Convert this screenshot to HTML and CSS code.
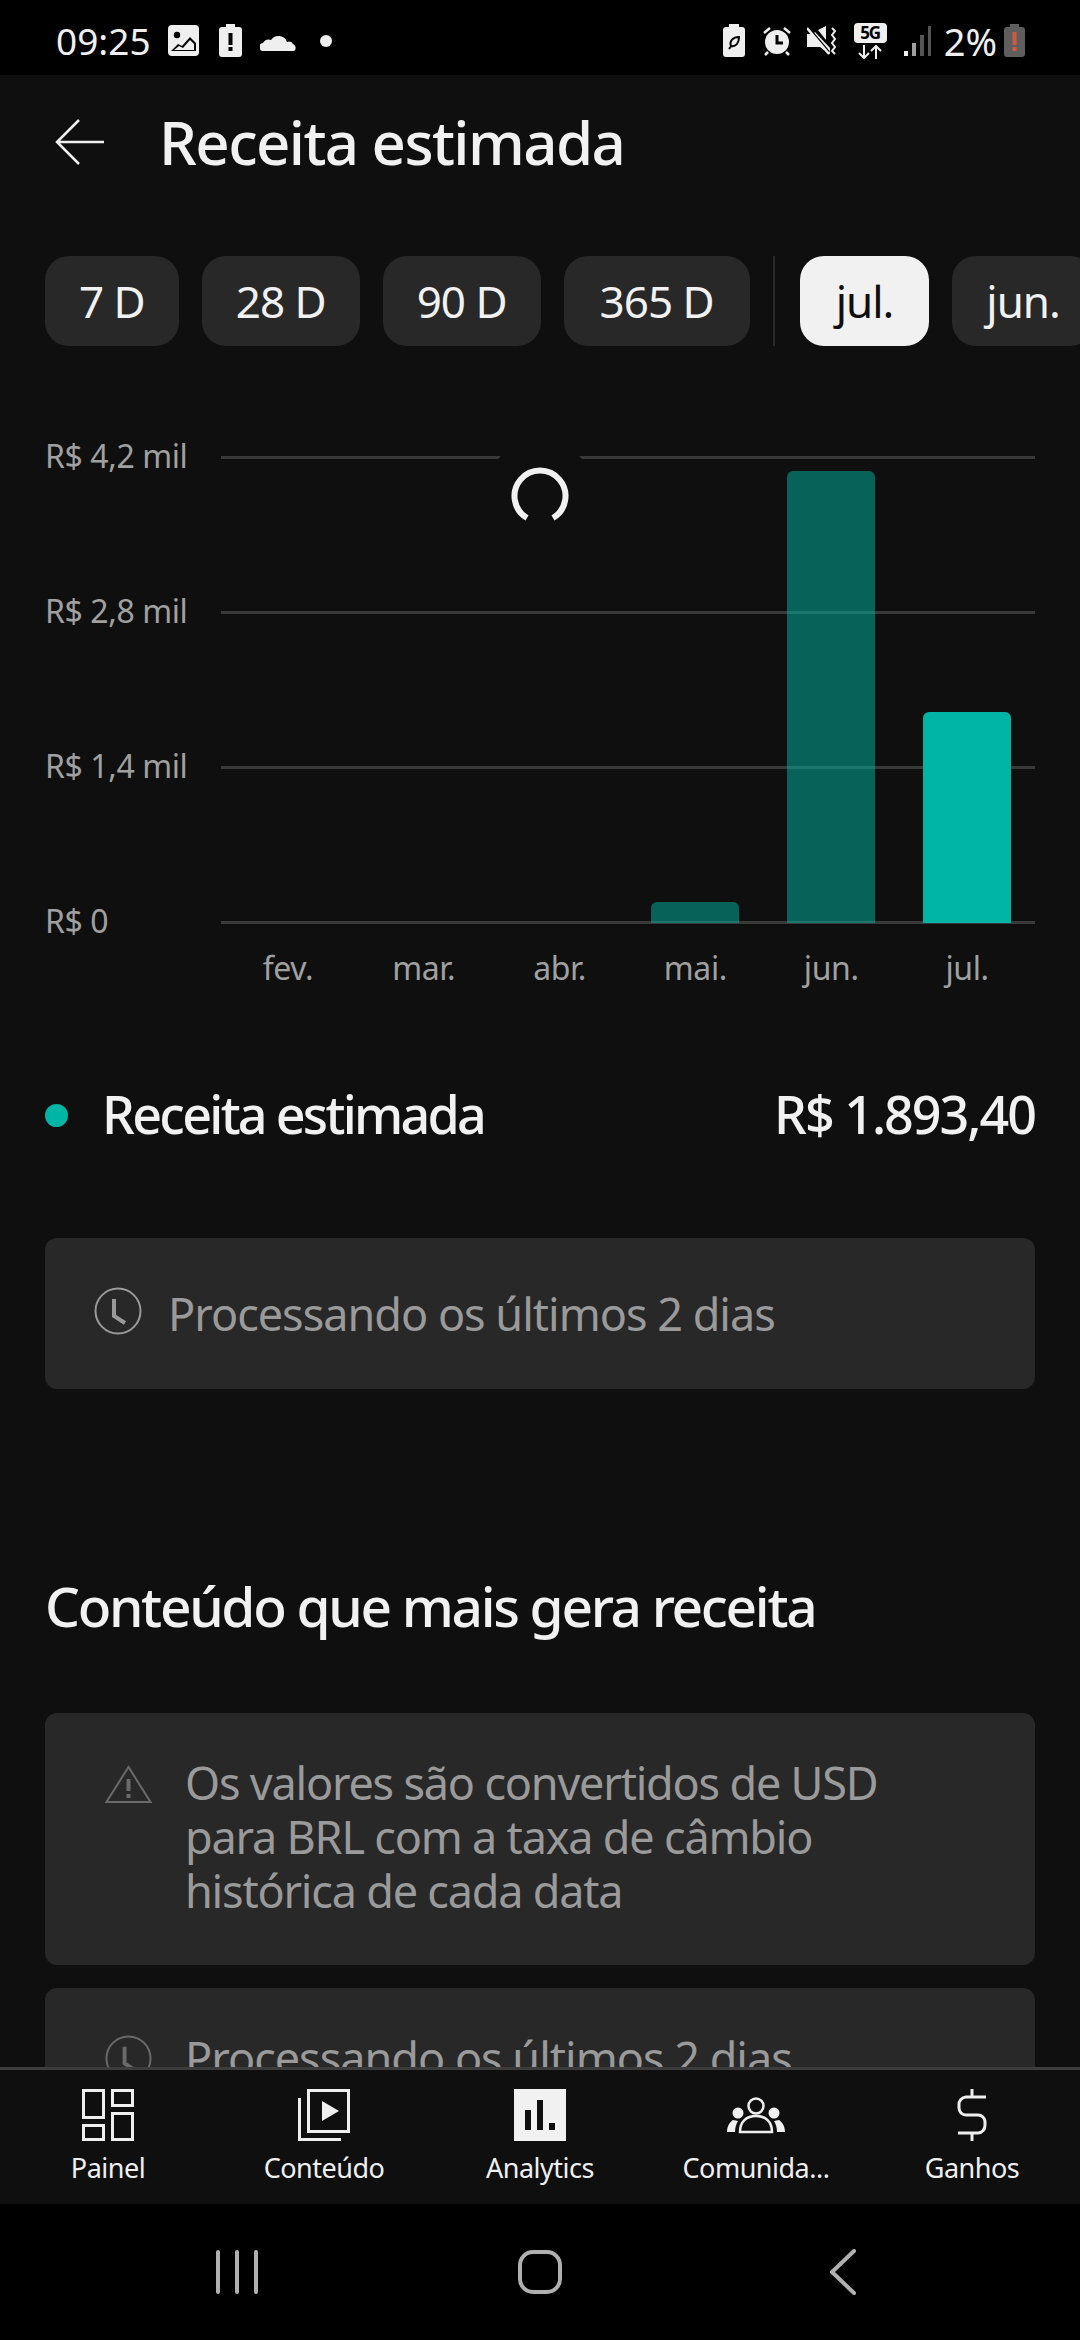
FILE: index.html
```html
<!DOCTYPE html>
<html lang="pt-BR">
<head>
  <meta charset="UTF-8" />
  <meta name="viewport" content="width=device-width, initial-scale=1.0" />
  <title>Receita estimada</title>
  <link rel="stylesheet" href="styles.css">
</head>
<body>
  <div class="status">
    <div class="status-side">
      <span class="time">09:25</span>
      <svg class="st st-image" width="31" height="31" viewBox="0 0 31 31"><rect width="31" height="31" rx="4" fill="#efefef"/><circle cx="9" cy="10" r="3.2" fill="#000"/><path d="M3 26l7-7 4 2 8-9 6 6v8z" fill="#000"/><path d="M6 25l5-4 4 2 7-8 4 4v6z" fill="#efefef"/></svg>
      <svg class="st st-alert" width="23" height="33" viewBox="0 0 23 33"><path d="M7 0h9v3h4a3 3 0 0 1 3 3v24a3 3 0 0 1-3 3H3a3 3 0 0 1-3-3V6a3 3 0 0 1 3-3h4z" fill="#efefef"/><rect x="9.500" y="9" width="4" height="12" fill="#000"/><rect x="9.500" y="23" width="4" height="4" fill="#000"/></svg>
      <svg class="st st-cloud" width="36" height="20" viewBox="0 0 36 20"><path d="M4 20a4 4 0 0 1-1-8 7 7 0 0 1 8-3 9 9 0 0 1 16 2 5 5 0 0 1 6 2 4 4 0 0 1 1 7z" fill="#efefef"/></svg>
      <span class="st-dot"></span>
    </div>
    <div class="status-side">
      <svg class="st" width="22" height="33" viewBox="0 0 22 33"><path d="M6 0h10v3h3a3 3 0 0 1 3 3v24a3 3 0 0 1-3 3H3a3 3 0 0 1-3-3V6a3 3 0 0 1 3-3h3z" fill="#efefef"/><path d="M6 25l3-4M8 22c-2-5 2-9 8-9 0 6-3 10-8 9z" fill="none" stroke="#000" stroke-width="2"/></svg>
      <svg class="st st-alarm" width="30" height="30" viewBox="0 0 30 30"><circle cx="15" cy="16" r="12" fill="#efefef"/><path d="M15 9v8h6" fill="none" stroke="#000" stroke-width="3"/><path d="M2 7l6-5M28 7l-6-5M6 26l-3 3M24 26l3 3" stroke="#efefef" stroke-width="2.500"/></svg>
      <svg class="st st-mute" width="30" height="29" viewBox="0 0 30 29"><path d="M0 8h6l2-2 15 16v6L13 21H0z" fill="#efefef"/><path d="M11 4l8-4v14z" fill="#efefef"/><path d="M1 1l21 25" stroke="#000" stroke-width="2"/><path d="M0 2l22 26" stroke="#efefef" stroke-width="2.500"/><path d="M25 2l3 3-3 4 3 4-3 4 3 4-3 4 3 3" fill="none" stroke="#efefef" stroke-width="2"/></svg>
      <div class="st-net">
        <span class="net-badge">5G</span>
        <svg width="26" height="14" viewBox="0 0 26 14"><path d="M7 0v12M2 8l5 5 5-5M19 14V2M14 6l5-5 5 5" fill="none" stroke="#efefef" stroke-width="2"/></svg>
      </div>
      <svg class="st st-signal" width="27" height="30" viewBox="0 0 27 30"><rect x="0" y="25" width="4" height="5" fill="#efefef"/><rect x="8" y="17" width="4" height="13" fill="#a0a0a0"/><rect x="16" y="9" width="4" height="21" fill="#555"/><rect x="24" y="0" width="3" height="30" fill="#555"/></svg>
      <span class="battery-text">2%</span>
      <svg class="st" width="21" height="33" viewBox="0 0 21 33"><path d="M6 0h9v3h3a3 3 0 0 1 3 3v24a3 3 0 0 1-3 3H3a3 3 0 0 1-3-3V6a3 3 0 0 1 3-3h3z" fill="#5e5e5e"/><rect x="8.500" y="8" width="4" height="13" fill="#d2593d"/><rect x="8.500" y="23" width="4" height="4" fill="#d2593d"/></svg>
    </div>
  </div>

  <div class="screen">
    <div class="appbar">
      <svg class="back" width="50" height="46" viewBox="0 0 50 46"><path d="M24 1L2 23l22 22M2 23h47" fill="none" stroke="#efefef" stroke-width="2.500"/></svg>
      <h1>Receita estimada</h1>
    </div>

    <div class="chips">
      <span class="chip">7 D</span>
      <span class="chip">28 D</span>
      <span class="chip">90 D</span>
      <span class="chip chip-wide">365 D</span>
      <span class="chip-divider"></span>
      <span class="chip chip-active">jul.</span>
      <span class="chip">jun.</span>
    </div>

    <div class="chart">
      <div class="plot">
        <div class="row"><span class="row-label">R$ 4,2 mil</span><span class="row-line"></span></div>
        <div class="row"><span class="row-label">R$ 2,8 mil</span><span class="row-line"></span></div>
        <div class="row"><span class="row-label">R$ 1,4 mil</span><span class="row-line"></span></div>
        <div class="row"><span class="row-label">R$ 0</span><span class="row-line"></span></div>
        <div class="bars">
          <div class="bar-slot"></div>
          <div class="bar-slot"></div>
          <div class="bar-slot"></div>
          <div class="bar-slot"><div class="bar bar-dim" style="height:21px"></div></div>
          <div class="bar-slot"><div class="bar bar-dim" style="height:452px"></div></div>
          <div class="bar-slot"><div class="bar" style="height:211px"></div></div>
        </div>
        <div class="spinner">
          <svg width="60" height="60" viewBox="0 0 60 60"><path d="M17 52A25.500 25.500 0 1 1 43 52" fill="none" stroke="#f1f1f1" stroke-width="6"/></svg>
        </div>
      </div>
      <div class="months">
        <span>fev.</span><span>mar.</span><span>abr.</span><span>mai.</span><span>jun.</span><span>jul.</span>
      </div>
    </div>

    <div class="legend">
      <span class="legend-dot"></span>
      <span class="legend-name">Receita estimada</span>
      <span class="legend-value">R$ 1.893,40</span>
    </div>

    <div class="note note-first">
      <svg class="note-icon" width="48" height="48" viewBox="0 0 48 48"><circle cx="24" cy="24" r="22.500" fill="none" stroke="#9a9a9a" stroke-width="2"/><path d="M20 12v17l11 7" fill="none" stroke="#9a9a9a" stroke-width="4"/></svg>
      <span>Processando os últimos 2 dias</span>
    </div>

    <h2>Conteúdo que mais gera receita</h2>

    <div class="note note-top note-warn">
      <svg class="note-icon-wide" width="47" height="38" viewBox="0 0 47 38"><path d="M23.500 2L1.500 37h44z" fill="none" stroke="#6a6a6a" stroke-width="2"/><rect x="21.500" y="14" width="4" height="12" fill="#6a6a6a"/><rect x="21.500" y="29" width="4" height="4" fill="#6a6a6a"/></svg>
      <p>Os valores são convertidos de USD para BRL com a taxa de câmbio histórica de cada data</p>
    </div>

    <div class="note note-top note-last">
      <svg class="note-icon-wide" width="47" height="47" viewBox="0 0 48 48"><circle cx="24" cy="24" r="22.500" fill="none" stroke="#6a6a6a" stroke-width="2"/><path d="M20 12v17l11 7" fill="none" stroke="#6a6a6a" stroke-width="4"/></svg>
      <p>Processando os últimos 2 dias</p>
    </div>
  </div>

  <nav class="tabs">
    <a class="tab">
      <svg width="52" height="52" viewBox="0 0 52 52"><g fill="none" stroke="#efefef" stroke-width="3"><rect x="1.500" y="1.500" width="20" height="27"/><rect x="30.500" y="1.500" width="20" height="15"/><rect x="1.500" y="36.500" width="20" height="14"/><rect x="30.500" y="24.500" width="20" height="26"/></g></svg>
      <span>Painel</span>
    </a>
    <a class="tab">
      <svg width="52" height="52" viewBox="0 0 52 52"><g fill="none" stroke="#efefef" stroke-width="3"><rect x="10.500" y="1.500" width="40" height="41"/><path d="M1.500 9v41.500H43"/></g><path d="M24 12l17 10-17 10z" fill="#efefef"/></svg>
      <span>Conteúdo</span>
    </a>
    <a class="tab">
      <svg width="52" height="52" viewBox="0 0 52 52"><rect width="52" height="52" fill="#f1f1f1"/><rect x="11" y="21" width="6" height="20" fill="#0f0f0f"/><rect x="23" y="11" width="6" height="30" fill="#0f0f0f"/><rect x="35" y="34" width="6" height="7" fill="#0f0f0f"/></svg>
      <span>Analytics</span>
    </a>
    <a class="tab">
      <svg width="58" height="52" viewBox="0 0 58 52"><circle cx="29" cy="17" r="7.500" fill="none" stroke="#efefef" stroke-width="2.500"/><path d="M13 43c0-11 7-16 16-16s16 5 16 16z" fill="none" stroke="#efefef" stroke-width="2.500"/><circle cx="11" cy="24" r="5.500" fill="#efefef"/><circle cx="47" cy="24" r="5.500" fill="#efefef"/><path d="M0 43c0-6 3-10 6-12l5 1c-2 3-3 7-3 11zM58 43c0-6-3-10-6-12l-5 1c2 3 3 7 3 11z" fill="#efefef"/></svg>
      <span>Comunida...</span>
    </a>
    <a class="tab">
      <svg width="52" height="52" viewBox="0 0 52 52"><path d="M40 8H20a7.500 7.500 0 0 0-7 8v3a7 7 0 0 0 7 7h12a7 7 0 0 1 7 7v3a7.500 7.500 0 0 1-7 8H12M26 0v8M26 44v8" fill="none" stroke="#efefef" stroke-width="3"/></svg>
      <span>Ganhos</span>
    </a>
  </nav>

  <div class="sysbar">
    <svg width="44" height="44" viewBox="0 0 44 44"><path d="M3 2v40M22 2v40M41 2v40" stroke="#b0b0b0" stroke-width="4" stroke-linecap="round"/></svg>
    <svg width="44" height="44" viewBox="0 0 44 44"><rect x="2" y="2" width="40" height="40" rx="13" fill="none" stroke="#b0b0b0" stroke-width="4"/></svg>
    <svg width="28" height="46" viewBox="0 0 28 46"><path d="M25 2L3 23l22 21" fill="none" stroke="#b0b0b0" stroke-width="4" stroke-linecap="round" stroke-linejoin="round"/></svg>
  </div>
</body>
</html>
```

FILE: styles.css
```css
* {
  box-sizing: border-box;
}
html, body {
  margin: 0;
  padding: 0;
}
body {
  width: 1080px;
  height: 2340px;
  overflow: hidden;
  display: flex;
  flex-direction: column;
  background: #000;
  color: #f1f1f1;
  font-family: 'Noto Sans', sans-serif;
}

/* status bar */
.status {
  height: 75px;
  flex: none;
  display: flex;
  justify-content: space-between;
  align-items: center;
  padding: 6px 55px 0 56px;
  background: #000;
}
.status-side {
  display: flex;
  align-items: center;
}
.st {
  display: block;
  flex: none;
}
.time {
  font-size: 37px;
  color: #efefef;
  margin-right: 17px;
}
.st-alert {
  margin-left: 20px;
}
.st-cloud {
  margin-left: 18px;
}
.st-dot {
  width: 12px;
  height: 12px;
  margin-left: 24px;
  border-radius: 50%;
  background: #efefef;
}
.st-alarm {
  margin-left: 17px;
}
.st-mute {
  margin-left: 15px;
}
.st-net {
  display: flex;
  flex-direction: column;
  align-items: center;
  margin-left: 17px;
  width: 33px;
}
.net-badge {
  width: 33px;
  height: 20px;
  border-radius: 4px;
  background: #efefef;
  color: #000;
  font-size: 17px;
  font-weight: 700;
  line-height: 20px;
  text-align: center;
  letter-spacing: -1px;
}
.st-net svg {
  margin-top: 2px;
}
.st-signal {
  margin-left: 17px;
}
.battery-text {
  font-size: 38px;
  color: #efefef;
  margin: 0 7px 0 13px;
}

/* main scroll area */
.screen {
  flex: 1;
  min-height: 0;
  overflow: hidden;
  background: #0f0f0f;
}
.appbar {
  height: 136px;
  display: flex;
  align-items: center;
  padding: 0 0 2px 55px;
}
.back {
  flex: none;
  margin-right: 54px;
}
h1 {
  margin: 0;
  font-size: 60px;
  font-weight: 500;
  letter-spacing: -1.6px;
  color: #f1f1f1;
}

.chips {
  display: flex;
  align-items: stretch;
  gap: 23px;
  height: 90px;
  margin-top: 45px;
  padding-left: 45px;
  overflow: hidden;
}
.chip {
  flex: none;
  display: flex;
  align-items: center;
  padding: 0 34px;
  border-radius: 24px;
  background: #282828;
  font-size: 44px;
  letter-spacing: -1px;
}
.chip-wide {
  padding: 0 36px;
}
.chip-active {
  padding: 0 36px;
  background: #f1f1f1;
  color: #0f0f0f;
}
.chip-divider {
  flex: none;
  width: 2px;
  background: #2a2a2a;
  margin-right: 2px;
}

/* chart */
.chart {
  margin-top: 91px;
  padding: 0 45px;
}
.plot {
  position: relative;
  display: flex;
  flex-direction: column;
  gap: 115px;
}
.row {
  display: flex;
  align-items: center;
  height: 40px;
}
.row-label {
  flex: none;
  width: 176px;
  padding-bottom: 3px;
  font-size: 32px;
  letter-spacing: -0.4px;
  color: #a0a0a0;
  white-space: nowrap;
}
.row-line {
  flex: 1;
  height: 3px;
  background: #393939;
}
.bars {
  position: absolute;
  left: 175px;
  right: 0;
  bottom: 19px;
  display: flex;
  align-items: flex-end;
}
.bar-slot {
  flex: 1;
  display: flex;
  justify-content: center;
}
.bar {
  width: 88px;
  border-radius: 6px 6px 0 0;
  background: #00b5a3;
}
.bar-dim {
  opacity: 0.5;
}
.spinner {
  position: absolute;
  left: 0;
  right: 0;
  top: 3px;
  margin: 0 auto;
  width: 112px;
  height: 112px;
  display: flex;
  align-items: center;
  justify-content: center;
  border-radius: 50%;
  background: #0f0f0f;
}
.months {
  display: flex;
  margin-top: 4px;
  padding-left: 175px;
}
.months span {
  flex: 1;
  text-align: center;
  font-size: 32px;
  line-height: 44px;
  letter-spacing: -0.4px;
  color: #a0a0a0;
}

/* legend */
.legend {
  display: flex;
  align-items: center;
  height: 60px;
  margin: 95px 45px 0;
}
.legend-dot {
  flex: none;
  width: 23px;
  height: 23px;
  border-radius: 50%;
  background: #00b5a3;
  margin-right: 34px;
}
.legend-name, .legend-value {
  padding-bottom: 4px;
  font-size: 52px;
  font-weight: 500;
  letter-spacing: -2.7px;
}
.legend-value {
  margin-left: auto;
  letter-spacing: -2px;
}

/* notes */
.note {
  display: flex;
  margin: 0 45px;
  border-radius: 12px;
  background: #282828;
  color: #9a9a9a;
  font-size: 45px;
  letter-spacing: -1px;
}
.note-first {
  align-items: center;
  height: 151px;
  margin-top: 93px;
  padding-left: 49px;
}
.note-icon {
  flex: none;
  margin: 0 26px 5px 0;
}
h2 {
  margin: 182px 45px 0;
  font-size: 55px;
  line-height: 70px;
  font-weight: 500;
  letter-spacing: -2.3px;
  color: #f1f1f1;
}
.note-top {
  padding: 43px 60px 47px 60px;
}
.note-top p {
  margin: 0;
  max-width: 720px;
  line-height: 54px;
}
.note-warn {
  margin-top: 72px;
  letter-spacing: -1.2px;
}
.note-icon-wide {
  flex: none;
  margin: 9px 33px 0 0;
}
.note-last {
  margin-top: 23px;
  height: 200px;
}
.note-last .note-icon-wide {
  margin-top: 4px;
}

/* bottom tabs */
.tabs {
  flex: none;
  height: 137px;
  display: grid;
  grid-template-columns: repeat(5, 1fr);
  border-top: 3px solid #3c3c3c;
  background: #0f0f0f;
}
.tab {
  display: flex;
  flex-direction: column;
  align-items: center;
  padding-top: 19px;
}
.tab span {
  margin-top: 7px;
  font-size: 27px;
  line-height: 40px;
  letter-spacing: -0.5px;
  color: #efefef;
  white-space: nowrap;
}

/* android nav */
.sysbar {
  flex: none;
  height: 136px;
  display: grid;
  grid-template-columns: 1fr 1fr 1fr;
  justify-items: center;
  align-items: center;
  padding: 0 85px;
  background: #000;
}
```
